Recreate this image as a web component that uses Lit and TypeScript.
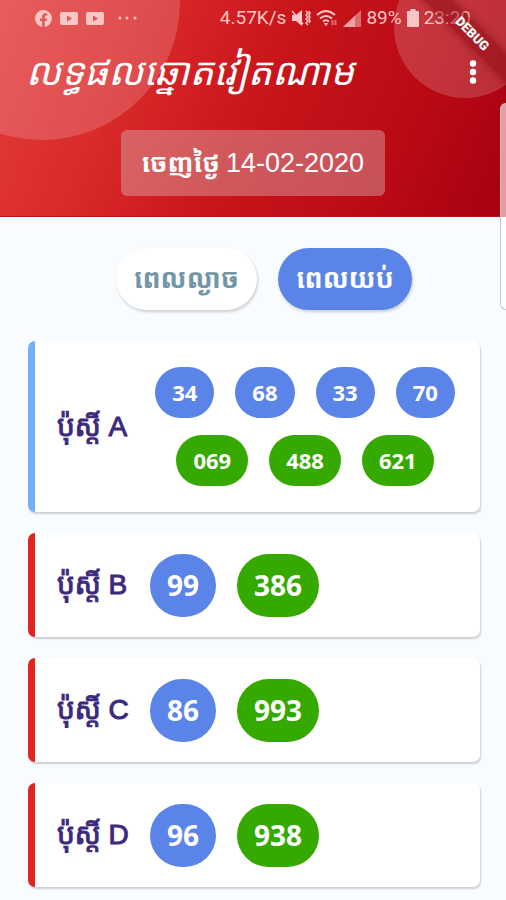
import { LitElement, html, css } from "lit";
import { customElement, state } from "lit/decorators.js";

interface Post {
  letter: string;
  pairs: string[];
  triples: string[];
}

const POSTS: Post[] = [
  { letter: "A", pairs: ["34", "68", "33", "70"], triples: ["069", "488", "621"] },
  { letter: "B", pairs: ["99"], triples: ["386"] },
  { letter: "C", pairs: ["86"], triples: ["993"] },
  { letter: "D", pairs: ["96"], triples: ["938"] },
];

const youtube = html`<svg width="18" height="13" viewBox="0 0 18 13" fill="currentColor" aria-hidden="true">
  <path fill-rule="evenodd" d="M2 0h14q2 0 2 2v9q0 2-2 2H2q-2 0-2-2V2q0-2 2-2zM7 3.5v6l5-3z" />
</svg>`;

@customElement("app-root")
export class AppRoot extends LitElement {
  @state() private session = 1;

  static styles = css`
    :host {
      display: block;
      position: relative;
      min-height: 100vh;
      overflow: hidden;
      background: #f8fcff;
      font-family: "Liberation Sans", "Noto Sans Khmer", "Khmer OS", sans-serif;
    }
    * {
      box-sizing: border-box;
    }
    header {
      position: relative;
      overflow: hidden;
      display: flex;
      flex-direction: column;
      align-items: center;
      padding-bottom: 20px;
      border-bottom: 1px solid #b81219;
      background: linear-gradient(113deg, #e43c3c 0%, #da2a2b 25%, #c9151b 50%, #b90a14 78%, #a60010 100%);
      color: #fff;
    }
    .bubble {
      position: absolute;
      border-radius: 50%;
      background: rgba(255, 255, 255, 0.17);
    }
    .bubble.left {
      left: -96px;
      top: -136px;
      width: 276px;
      height: 276px;
    }
    .bubble.right {
      right: -30px;
      top: -44px;
      width: 142px;
      height: 142px;
    }
    .status {
      position: relative;
      display: flex;
      align-self: stretch;
      align-items: center;
      height: 36px;
      padding: 0 35px;
      color: #fbc6c6;
      font: 19px/24px Roboto, sans-serif;
      white-space: nowrap;
    }
    .status .apps,
    .status .system {
      display: flex;
      align-items: center;
      gap: 8px;
    }
    .status .system {
      gap: 5px;
      margin-left: auto;
    }
    .bar {
      position: relative;
      display: flex;
      align-self: stretch;
      align-items: center;
      justify-content: space-between;
      height: 72px;
      padding: 0 26px;
    }
    h1 {
      margin: 0;
      font-size: 38px;
      line-height: 60px;
      font-weight: 400;
      font-style: italic;
      white-space: nowrap;
    }
    .more {
      display: flex;
      padding: 0;
      border: 0;
      background: none;
      color: #fff;
    }
    .date {
      position: relative;
      display: flex;
      align-items: center;
      justify-content: center;
      height: 66px;
      min-width: 264px;
      margin-top: 22px;
      padding: 0 20px;
      border: 0;
      border-radius: 6px;
      background: rgba(220, 190, 190, 0.4);
      color: #fff;
      font: 27px/40px "Liberation Sans", "Noto Sans Khmer", sans-serif;
      gap: 6px;
      white-space: nowrap;
    }
    .date b {
      font-size: 26px;
    }
    .debug {
      position: absolute;
      top: 24px;
      right: -56px;
      width: 180px;
      height: 20px;
      transform: rotate(45deg);
      background: rgba(140, 8, 16, 0.5);
      box-shadow: 0 0 8px rgba(100, 0, 0, 0.5);
      color: #fff;
      font: 900 13px/20px Roboto, sans-serif;
      text-align: center;
    }
    .drawer {
      position: absolute;
      top: 103px;
      right: 0;
      width: 6px;
      height: 207px;
      border: 1px solid #c4c8cb;
      border-right: 0;
      border-radius: 6px 0 0 6px;
      background: rgba(255, 255, 255, 0.62);
    }
    nav {
      display: flex;
      justify-content: center;
      gap: 21px;
      padding: 31px 0 31px 22px;
    }
    .tab {
      min-width: 130px;
      height: 62px;
      padding: 0 18px;
      border: 0;
      border-radius: 31px;
      background: #fff;
      box-shadow: 1px 2px 3px rgba(0, 0, 0, 0.18);
      color: #7396a6;
      font: bold 27px/40px "Liberation Sans", "Noto Sans Khmer", sans-serif;
      white-space: nowrap;
    }
    .tab.on {
      background: #5b84e8;
      color: #fff;
    }
    main {
      display: flex;
      flex-direction: column;
      gap: 21px;
      padding: 0 26px 12px 28px;
    }
    .card {
      display: flex;
      align-items: center;
      min-height: 104px;
      padding: 20px 24px 20px 22px;
      border-left: 7px solid #e32222;
      border-radius: 7px;
      background: #fff;
      box-shadow: 1px 2px 2px rgba(0, 0, 0, 0.18);
    }
    .card.first {
      padding-block: 26px;
      border-left-color: #73b0fb;
    }
    h2 {
      flex: none;
      width: 93px;
      margin: 0;
      color: #3c2a7c;
      font-size: 28px;
      line-height: 40px;
      font-weight: 400;
      -webkit-text-stroke: 1px #3c2a7c;
      white-space: nowrap;
    }
    .first h2 {
      width: 97px;
    }
    .balls {
      display: flex;
      flex-wrap: wrap;
      gap: 21px;
    }
    .first .balls {
      flex: 1;
      flex-direction: column;
      gap: 17px;
    }
    .line {
      display: flex;
      justify-content: center;
      gap: 21px;
    }
    .ball {
      padding: 0 17px;
      border-radius: 32px;
      background: #5b84e8;
      color: #fff;
      font: bold 28px/63px "Open Sans", sans-serif;
    }
    .ball.green {
      background: #36a900;
    }
    .first .ball {
      font-size: 22px;
      line-height: 51px;
    }
  `;

  private balls(values: string[], tone: string) {
    return values.map((v) => html`<span class="ball ${tone}">${v}</span>`);
  }

  render() {
    return html`
      <header>
        <span class="bubble left"></span>
        <span class="bubble right"></span>
        <div class="status">
          <div class="apps">
            <svg width="17" height="17" viewBox="0 0 17 17" fill="currentColor" aria-hidden="true">
              <path d="M8.500 0a8.500 8.500 0 0 0-1.400 16.880V11H5V8.500h2.100V6.700c0-2.300 1.300-3.500 3.300-3.500l1.800.150V5.400h-1.100c-1 0-1.400.600-1.400 1.300v1.800H12L11.600 11H9.700v5.900A8.500 8.500 0 0 0 8.500 0z" />
            </svg>
            ${youtube} ${youtube}
            <svg width="34" height="4" viewBox="0 0 34 4" fill="currentColor" aria-hidden="true">
              <circle cx="8" cy="2" r="1.500" /><circle cx="15" cy="2" r="1.500" /><circle cx="23" cy="2" r="1.500" />
            </svg>
          </div>
          <div class="system">
            <span>4.57K/s</span>
            <svg width="20" height="18" viewBox="0 0 20 18" fill="currentColor" aria-hidden="true">
              <path d="M1 6h4l6-5v16l-6-5H1z" />
              <path d="M1 2l11 13M15 2l2 2-2 2 2 2-2 2 2 2-2 2 2 2M18 2l1 2-1 2 1 2-1 2 1 2-1 2" fill="none" stroke="currentColor" stroke-width="1.500" />
            </svg>
            <svg width="22" height="18" viewBox="0 0 22 18" fill="none" stroke="currentColor" stroke-width="2" aria-hidden="true">
              <path d="M1 6q9-8 18 0M4 9.500q6-5 12 0M7 12.500q3-2.500 6 0" />
              <path d="M8.500 14.500h3L10 16.500z" fill="currentColor" stroke-width="1" />
              <path d="M16.500 11v5M19.500 11v5" opacity=".5" />
            </svg>
            <svg width="18" height="17" viewBox="0 0 18 17" fill="currentColor" aria-hidden="true">
              <path d="M0 17L18 0v17z" opacity=".5" /><path d="M0 17L12 5.700V17z" opacity=".6" />
            </svg>
            <span>89%</span>
            <svg width="12" height="18" viewBox="0 0 12 18" fill="currentColor" aria-hidden="true">
              <path d="M3.500 0h5v2H11q1 0 1 1v14q0 1-1 1H1q-1 0-1-1V3q0-1 1-1h2.500z" />
            </svg>
            <span>23:20</span>
          </div>
        </div>
        <div class="bar">
          <h1>លទ្ធផលឆ្នោតវៀតណាម</h1>
          <button class="more" aria-label="Menu">
            <svg width="14" height="24" viewBox="0 0 14 24" fill="currentColor">
              <circle cx="7" cy="3.500" r="3.200" /><circle cx="7" cy="12" r="3.200" /><circle cx="7" cy="20.500" r="3.200" />
            </svg>
          </button>
        </div>
        <button class="date"><b>ចេញថ្ងៃ</b><span>14-02-2020</span></button>
        <span class="debug">DEBUG</span>
      </header>
      <nav>
        ${["ពេលល្ងាច", "ពេលយប់"].map(
          (label, i) => html`<button
            class="tab ${this.session === i ? "on" : ""}"
            aria-pressed=${this.session === i}
            @click=${() => (this.session = i)}
          >${label}</button>`
        )}
      </nav>
      <main>
        ${POSTS.map((p, i) =>
          i === 0
            ? html`<section class="card first">
                <h2>ប៉ុស្តិ៍ ${p.letter}</h2>
                <div class="balls">
                  <div class="line">${this.balls(p.pairs, "")}</div>
                  <div class="line">${this.balls(p.triples, "green")}</div>
                </div>
              </section>`
            : html`<section class="card">
                <h2>ប៉ុស្តិ៍ ${p.letter}</h2>
                <div class="balls">${this.balls(p.pairs, "")}${this.balls(p.triples, "green")}</div>
              </section>`
        )}
      </main>
      <span class="drawer"></span>
    `;
  }
}
